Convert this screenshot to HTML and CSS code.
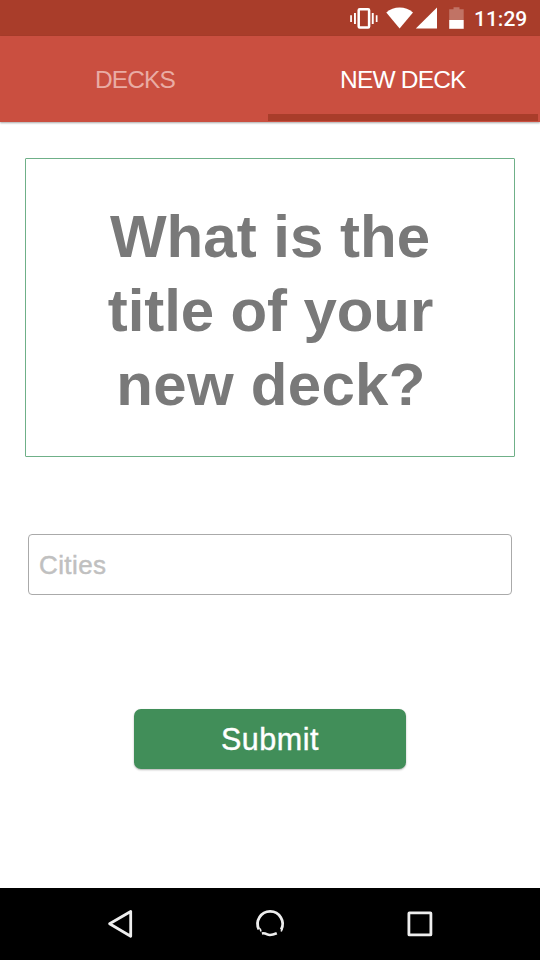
FILE: index.html
```html
<!DOCTYPE html>
<html lang="en">
<head>
<meta charset="utf-8">
<title>New Deck</title>
<link rel="stylesheet" href="styles.css">
</head>
<body>
<div class="screen">
  <header class="status">
    <svg class="status-icons" width="120" height="36" viewBox="348 0 120 36" fill="#fff">
      <rect x="358.7" y="9.3" width="10.4" height="18.2" rx="1" fill="none" stroke="#fff" stroke-width="2.5"/>
      <path d="M354 13h1.9v11H354zM350.2 15.3h1.7v6.6h-1.7zM371.8 13h1.9v11h-1.9zM375.8 15.3h1.7v6.6h-1.7z"/>
      <path d="M386.3 12.4Q392 7.5 399.6 7.5T413 12.4L399.6 28.6z"/>
      <path d="M437 7.4V28.6H415.8z"/>
      <path d="M449.2 9.2h4.3V7.2h6v2h4.2V20h-14.5z" opacity=".28"/>
      <path d="M449.2 20h14.5v8.8h-14.5z"/>
    </svg>
    <span class="clock">11:29</span>
  </header>
  <nav class="tabs">
    <a class="tab"><span class="decks">DECKS</span></a>
    <a class="tab active"><span class="new-deck">NEW DECK</span></a>
  </nav>
  <main class="content">
    <h1 class="question"><span class="line1">What is the</span><span class="line2">title of your</span><span class="line3">new deck?</span></h1>
    <input class="field" type="text" placeholder="Cities">
    <button class="submit"><span>Submit</span></button>
  </main>
  <footer class="navbar">
    <svg width="540" height="72" viewBox="0 888 540 72" fill="none" stroke="#eee" stroke-width="2.8" stroke-linejoin="round">
      <path d="M109.6 923.8L130.7 911.5V936.3z"/>
      <path d="M258.9 929.4A12.5 12.5 0 1 1 281.2 929.6"/>
      <path d="M261.9 933.4Q264.3 932.9 267.3 934.4T276.8 933.2" stroke-width="2.6"/>
      <path d="M260.1 928.4l.9 3M282.2 928.4l-1 3" stroke-width="1.6"/>
      <rect x="408.9" y="912.9" width="22" height="22" rx=".5"/>
    </svg>
  </footer>
</div>
</body>
</html>
```

FILE: styles.css
```css
* { box-sizing: border-box; }
body { margin: 0; background: #fff; font-family: "Liberation Sans", Arial, sans-serif; }
.screen { width: 540px; height: 960px; display: flex; flex-direction: column; overflow: hidden; }
.status { height: 36px; background: #a93d2a; display: flex; align-items: center; justify-content: flex-end; padding-right: 12px; }
.status-icons { display: block; }
.clock { width: 60px; padding-left: 6px; color: #fff; font: 500 21px/36px Roboto, sans-serif; padding-top: 2px; }
.tabs { height: 86px; flex: none; display: flex; background: #ca4f40; box-shadow: 0 1px 2px rgba(0,0,0,.35); }
.tab { flex: 0 0 268px; padding: 29px 0 0 95px; color: #e9aca4; font-size: 24.5px; line-height: 30px; }
.tab.active { flex-basis: 270px; padding-left: 72px; color: #fff; border-bottom: 7px solid #a93d2a; margin-bottom: 1px; }
.tab span { display: block; white-space: nowrap; }
.decks { letter-spacing: -.9px; }
.new-deck { letter-spacing: -.8px; }
.content { flex: 1; display: flex; flex-direction: column; align-items: flex-start; padding: 36px 0 0 25px; }
.question { width: 490px; height: 299px; margin: 0; padding: 41px 0 0; border: 1px solid #6fb088; border-radius: 1px; color: #797979; font-size: 60px; line-height: 74px; text-align: center; }
.question span { display: block; white-space: nowrap; }
.line1 { letter-spacing: 0; }
.line2 { letter-spacing: -.1px; padding-left: 1px; }
.line3 { letter-spacing: .3px; padding-left: 2px; }
.field { width: 484px; height: 61px; margin: 77px 0 0 3px; padding: 1px 0 0 10px; border: 1px solid #aaa; border-radius: 4px; background: #fff; font: 26px "Liberation Sans", Arial, sans-serif; letter-spacing: .4px; outline: none; }
.field::placeholder { color: #c0c0c0; opacity: 1; -webkit-text-stroke: .45px #c0c0c0; }
.submit { width: 272px; height: 60px; margin: 114px 0 0 109px; padding: 0; border: 0; border-radius: 7px; background: #418e59; box-shadow: 0 1px 2px rgba(0,0,0,.3); color: #fff; font: 30.5px/60px "Liberation Sans", Arial, sans-serif; -webkit-text-stroke: .4px #fff; }
.submit span { letter-spacing: .5px; }
.navbar { height: 72px; flex: none; background: #000; }
.navbar svg { display: block; }
```
